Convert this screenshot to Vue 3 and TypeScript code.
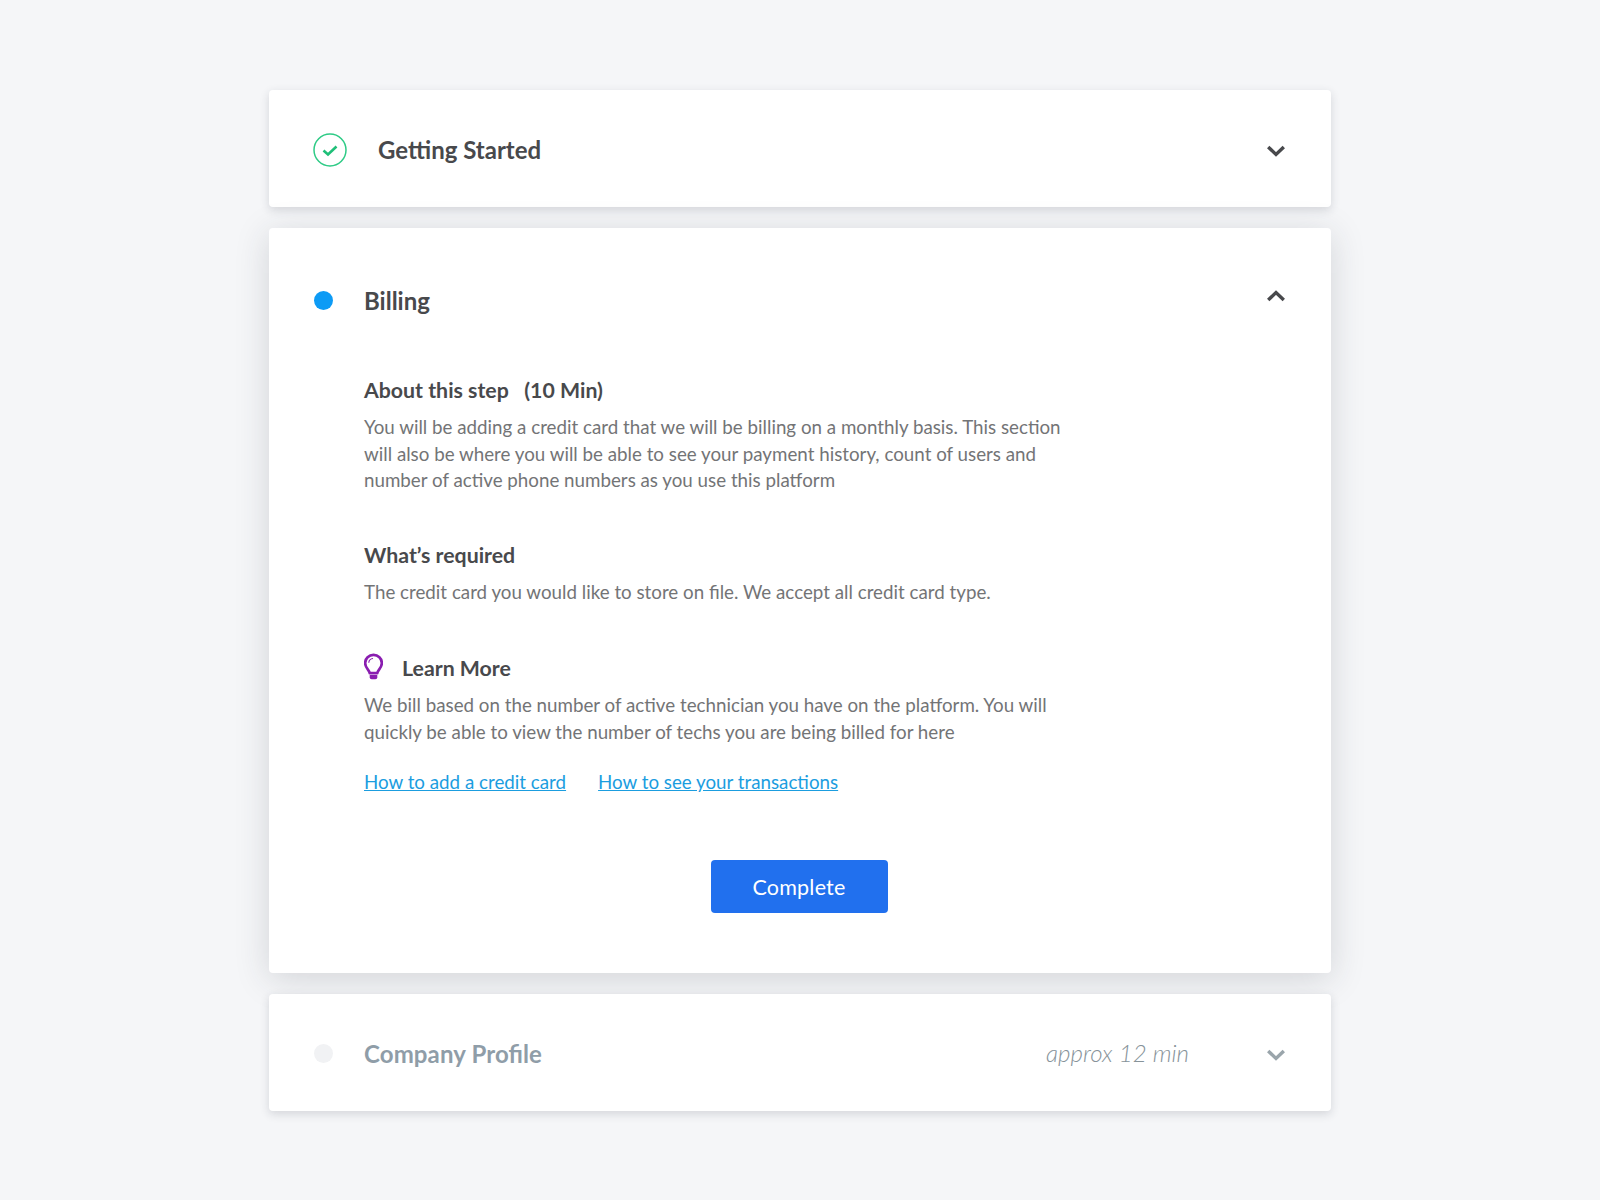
<script setup lang="ts">
interface Section {
  heading: string;
  text: string[];
}

const sections: Section[] = [
  {
    heading: "About this step \u00a0 (10 Min)",
    text: [
      "You will be adding a credit card that we will be billing on a monthly basis. This section",
      "will also be where you will be able to see your payment history, count of users and",
      "number of active phone numbers as you use this platform",
    ],
  },
  {
    heading: "What’s required",
    text: ["The credit card you would like to store on file. We accept all credit card type."],
  },
];

const learnMore = [
  "We bill based on the number of active technician you have on the platform. You will",
  "quickly be able to view the number of techs you are being billed for here",
];
</script>

<template>
  <main class="page">
    <section class="card card-row">
      <svg class="check" width="34" height="34" viewBox="0 0 34 34" fill="none">
        <circle cx="17" cy="17" r="16" stroke="#2ecb86" stroke-width="1.5" />
        <path d="M10.5 17.5l4.5 4 8.500-8" stroke="#1fbf78" stroke-width="2.6" />
      </svg>
      <h2 class="title">Getting Started</h2>
      <svg class="chevron" width="18" height="12" viewBox="0 0 18 12" fill="none">
        <path d="M1.200 2l7.800 7.500L16.800 2" stroke="#48494c" stroke-width="3.400" />
      </svg>
    </section>

    <section class="card card-open">
      <header class="open-head">
        <span class="dot dot-active"></span>
        <h2 class="title">Billing</h2>
        <svg class="chevron chevron-up" width="18" height="12" viewBox="0 0 18 12" fill="none">
          <path d="M1.200 10l7.800-7.500L16.800 10" stroke="#48494c" stroke-width="3.400" />
        </svg>
      </header>

      <div class="content">
        <div v-for="s in sections" :key="s.heading" class="block">
          <h3 class="heading">{{ s.heading }}</h3>
          <p class="copy">
            <span v-for="line in s.text" :key="line" class="line">{{ line }}</span>
          </p>
        </div>

        <div class="learn">
          <div class="learn-head">
            <svg class="bulb" width="19" height="28" viewBox="0 0 20 28" fill="none">
              <path
                d="M6 20.500c0-3-4.800-5.200-4.800-10.600A8.800 8.800 0 0 1 10 1.200a8.800 8.800 0 0 1 8.800 8.700c0 5.400-4.800 7.600-4.800 10.600z"
                stroke="#8a1db0"
                stroke-width="2.800"
                stroke-linejoin="round"
              />
              <path d="M5 9.500A5 5 0 0 1 9.500 5" stroke="#8a1db0" stroke-width="1.200" />
              <path d="M6 22.500h8v2.300a2 2 0 0 1-2 2H8a2 2 0 0 1-2-2z" fill="#8a1db0" />
            </svg>
            <h3 class="heading">Learn More</h3>
          </div>
          <p class="copy">
            <span v-for="line in learnMore" :key="line" class="line">{{ line }}</span>
          </p>
          <div class="links">
            <a href="#" class="link">How to add a credit card</a>
            <a href="#" class="link">How to see your transactions</a>
          </div>
        </div>
      </div>

      <div class="actions">
        <button type="button" class="complete">Complete</button>
      </div>
    </section>

    <section class="card card-row">
      <span class="dot dot-idle"></span>
      <h2 class="title title-idle">Company Profile</h2>
      <span class="estimate">approx 12 min</span>
      <svg class="chevron" width="18" height="12" viewBox="0 0 18 12" fill="none">
        <path d="M1.200 2l7.800 7.500L16.800 2" stroke="#9aa5ab" stroke-width="3.400" />
      </svg>
    </section>
  </main>
</template>

<style>
body {
  background: #f5f6f8;
}
</style>

<style scoped>
.page {
  width: 1062px;
  min-height: 1200px;
  box-sizing: border-box;
  margin: 0 auto;
  padding-top: 90px;
  display: flex;
  flex-direction: column;
  gap: 21px;
  font-family: Lato, "Liberation Sans", sans-serif;
  font-feature-settings: "liga" 1;
  text-rendering: optimizeLegibility;
  color: #48494c;
}

.card {
  background: #fff;
  border-radius: 4px;
  box-shadow: 0 3px 10px rgba(40, 45, 60, 0.16);
}

.card-row {
  height: 117px;
  box-sizing: border-box;
  padding: 0 46px 0 44px;
  display: flex;
  align-items: center;
}

.card-open {
  height: 745px;
  box-sizing: border-box;
  padding: 0 46px 0 44px;
  box-shadow: 0 6px 34px rgba(40, 45, 60, 0.17);
}

.open-head {
  height: 144px;
  display: flex;
  align-items: center;
}

.check {
  flex: none;
  margin-top: 2px;
  margin-right: 31px;
}

.dot {
  flex: none;
  width: 19px;
  height: 19px;
  border-radius: 50%;
  margin-left: 1px;
  margin-right: 31px;
}

.dot-active {
  background: #0d9bf5;
}

.dot-idle {
  background: #f1f2f4;
  margin-top: 2px;
}

.title {
  margin: 0;
  padding-top: 2px;
  font-size: 24px;
  line-height: 30px;
  font-weight: 700;
  color: #48494c;
  flex: 1;
}

.title-idle {
  color: #8f9da8;
  letter-spacing: 0.12px;
}

.chevron {
  flex: none;
  margin-top: 5px;
}

.chevron-up {
  margin-top: -9px;
}

.estimate {
  font-size: 24.100px;
  font-style: italic;
  font-weight: 300;
  color: #87939a;
  margin-right: 78px;
}

.content {
  padding: 4px 0 0 51px;
}

.block {
  margin-bottom: 47px;
}

.heading {
  margin: 0;
  font-size: 21.300px;
  line-height: 28px;
  font-weight: 700;
  color: #48494c;
}

.copy {
  margin: 10px 0 0;
  font-size: 18.750px;
  line-height: 26.500px;
  color: #737476;
}

.line {
  display: block;
  white-space: nowrap;
}

.learn {
  padding-top: 2px;
}

.learn-head {
  display: flex;
  align-items: center;
  gap: 19px;
}

.bulb {
  flex: none;
  margin-top: -3px;
}

.links {
  margin-top: 24px;
  display: flex;
  gap: 32px;
}

.link {
  font-size: 18.750px;
  line-height: 26px;
  color: #1b9ddf;
}

.actions {
  display: flex;
  justify-content: center;
  margin-top: 65px;
}

.complete {
  width: 177px;
  height: 53px;
  border: 0;
  border-radius: 4px;
  background: #2170ee;
  color: #fff;
  font-family: Lato, "Open Sans", sans-serif;
  font-size: 21.500px;
  letter-spacing: 0.2px;
}
</style>
